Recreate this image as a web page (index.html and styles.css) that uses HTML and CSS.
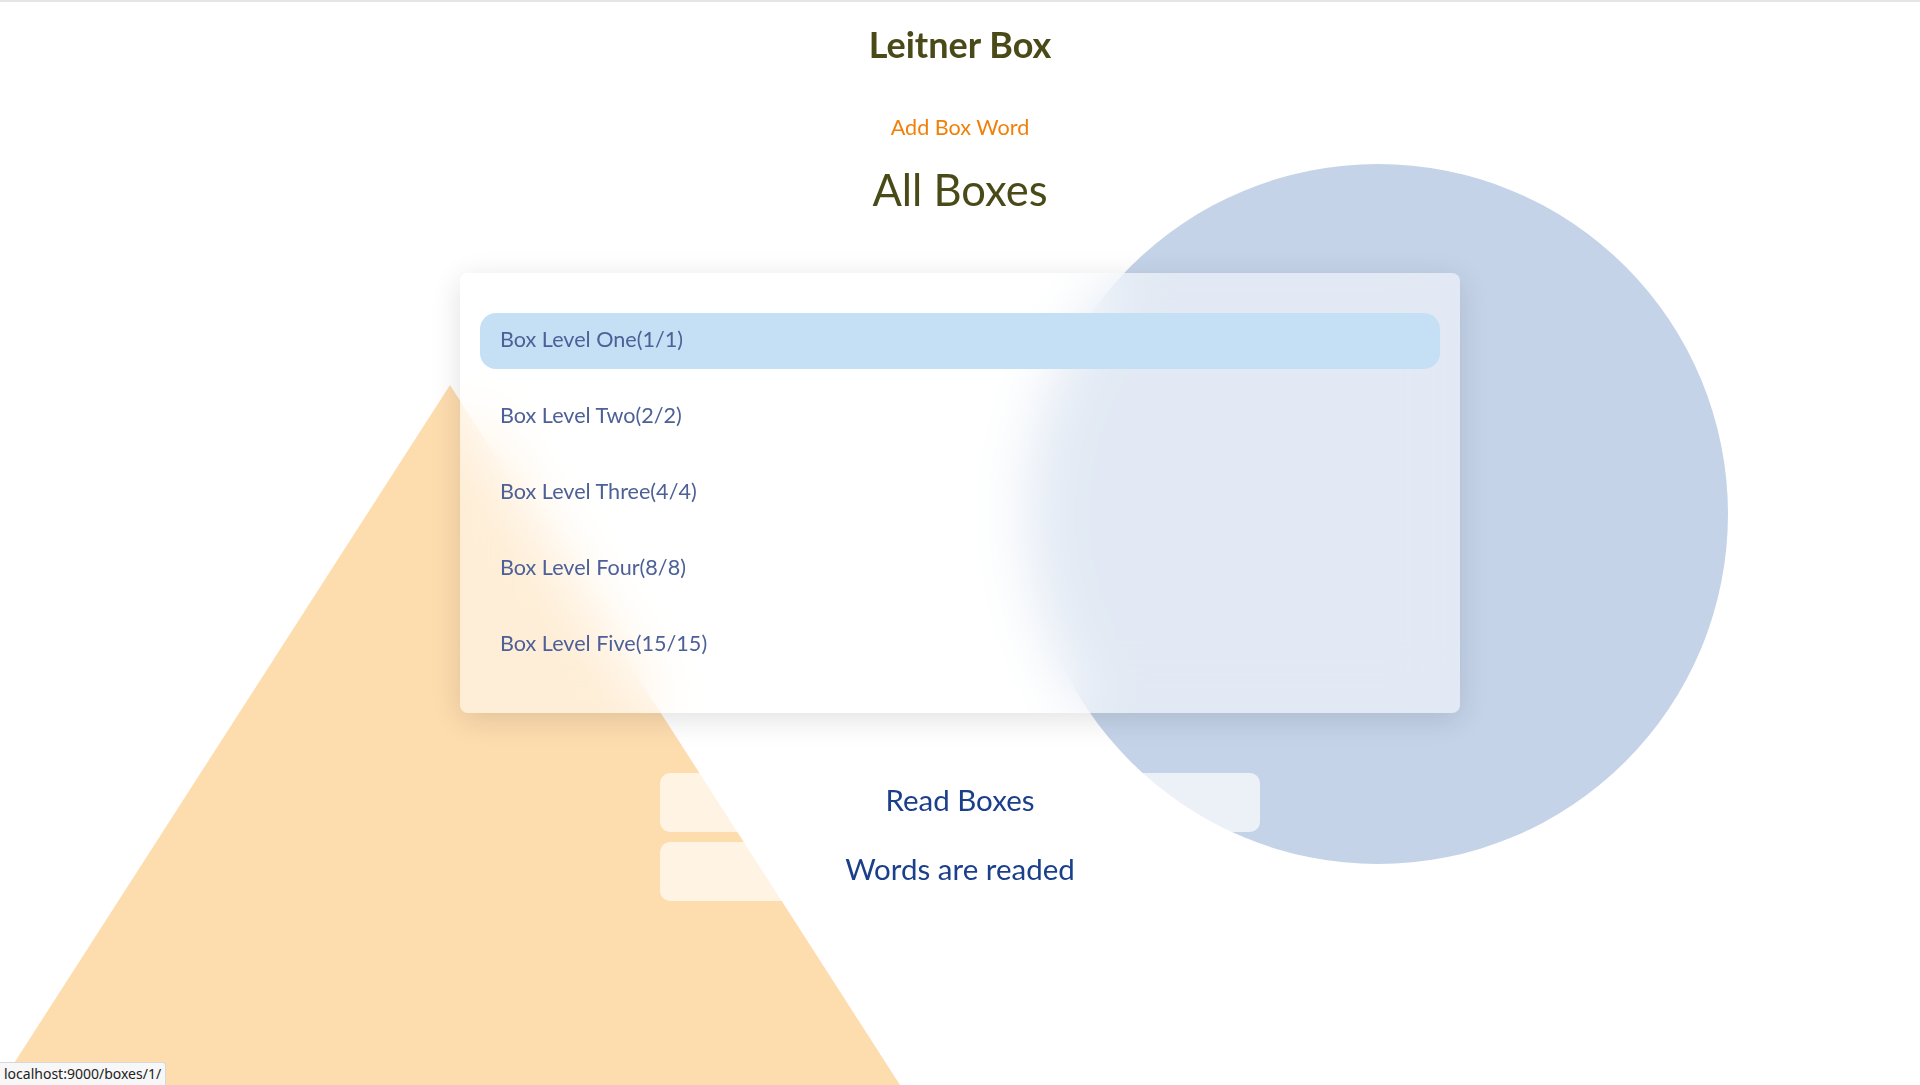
FILE: index.html
```html
<!DOCTYPE html>
<html lang="en">
<head>
<meta charset="utf-8">
<title>Leitner Box</title>
<link rel="stylesheet" href="styles.css">
</head>
<body>
<div class="bg-shapes">
  <div class="circle"></div>
  <div class="triangle"></div>
</div>
<main class="page">
  <h1 class="title">Leitner Box</h1>
  <a class="add-link" href="#">Add Box Word</a>
  <h2 class="subtitle">All Boxes</h2>
  <section class="card">
    <ul class="box-list">
      <li class="box-item active">Box Level One(1/1)</li>
      <li class="box-item">Box Level Two(2/2)</li>
      <li class="box-item">Box Level Three(4/4)</li>
      <li class="box-item">Box Level Four(8/8)</li>
      <li class="box-item">Box Level Five(15/15)</li>
    </ul>
  </section>
  <nav class="actions">
    <a class="action" href="#">Read Boxes</a>
    <a class="action" href="#">Words are readed</a>
  </nav>
</main>
<div class="status">localhost:9000/boxes/1/</div>
</body>
</html>
```
FILE: styles.css
```css
html, body {
  margin: 0;
  padding: 0;
  height: 100%;
  overflow: hidden;
}
body {
  font-family: Lato, "Open Sans", sans-serif;
  background: #ffffff;
  border-top: 2px solid #e5e5e5;
  box-sizing: border-box;
}
.bg-shapes {
  position: fixed;
  inset: 0;
  z-index: 0;
  pointer-events: none;
}
.circle {
  position: absolute;
  left: 1028px;
  top: 164px;
  width: 700px;
  height: 700px;
  border-radius: 50%;
  background: #c4d3e8;
}
.triangle {
  position: absolute;
  left: 0;
  bottom: 0;
  width: 0;
  height: 0;
  border-left: 450px solid transparent;
  border-right: 450px solid transparent;
  border-bottom: 700px solid #fddcae;
}
.page {
  position: relative;
  z-index: 1;
  display: flex;
  flex-direction: column;
  align-items: center;
  text-align: center;
}
.title {
  margin: 20px 0 0;
  font-size: 36px;
  line-height: 44px;
  font-weight: 700;
  color: #4a4a18;
}
.add-link {
  margin-top: 47px;
  font-size: 21.6px;
  line-height: 28px;
  color: #f08008;
  text-decoration: none;
}
.subtitle {
  margin: 22px 0 0;
  font-size: 43.5px;
  line-height: 52px;
  font-weight: 400;
  color: #4a4a18;
}
.card {
  margin-top: 58px;
  width: 1000px;
  box-sizing: border-box;
  padding: 40px 20px;
  border-radius: 8px;
  background: rgba(255, 255, 255, 0.5);
  backdrop-filter: blur(30px);
  -webkit-backdrop-filter: blur(30px);
  box-shadow: 0 6px 30px rgba(0, 0, 0, 0.12);
}
.box-list {
  list-style: none;
  margin: 0;
  padding: 0;
  display: flex;
  flex-direction: column;
  gap: 20px;
}
.box-item {
  height: 56px;
  box-sizing: border-box;
  padding: 0 20px 5px;
  display: flex;
  align-items: center;
  text-align: left;
  font-size: 21.6px;
  color: #4d6097;
  border-radius: 16px;
}
.box-item.active {
  background: #c5e0f5;
}
.actions {
  margin-top: 60px;
  display: flex;
  flex-direction: column;
  gap: 10px;
}
.action {
  width: 600px;
  height: 59px;
  box-sizing: border-box;
  padding-bottom: 7px;
  display: flex;
  align-items: center;
  justify-content: center;
  border-radius: 10px;
  background: rgba(255, 255, 255, 0.67);
  color: #1b3f8b;
  font-size: 29.5px;
  text-decoration: none;
}
.status {
  position: fixed;
  left: 0;
  bottom: 0;
  z-index: 5;
  height: 23px;
  padding: 0 4px;
  box-sizing: border-box;
  background: #f7f7f7;
  border: 1px solid #d8d8d8;
  border-left: none;
  border-bottom: none;
  border-top-right-radius: 3px;
  font-family: "Noto Sans", "Open Sans", sans-serif;
  font-size: 14px;
  line-height: 22px;
  color: #222;
}
```
